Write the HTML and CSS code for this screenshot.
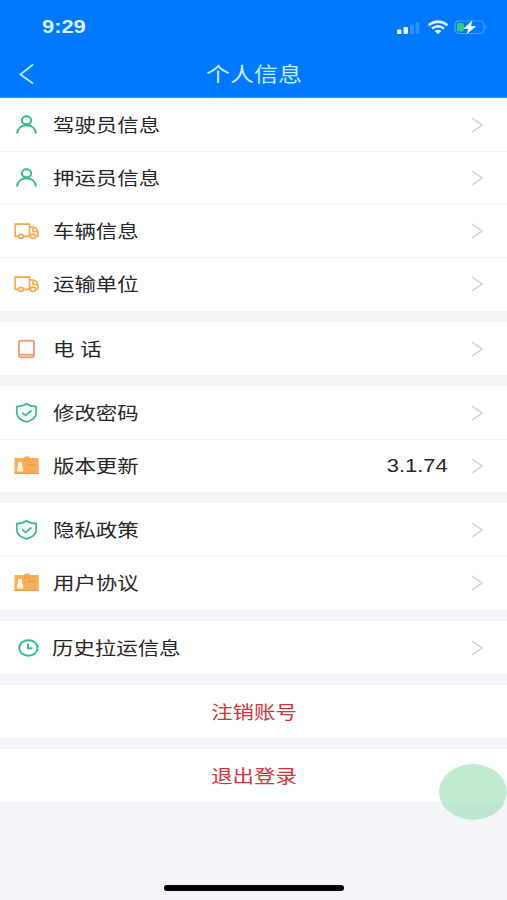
FILE: index.html
```html
<!DOCTYPE html>
<html lang="zh-CN">
<head>
<meta charset="utf-8">
<title>个人信息</title>
<link rel="stylesheet" href="styles.css">
</head>
<body>
<svg class="defs" width="0" height="0">
  <symbol id="user" viewBox="0 0 28 24"><ellipse cx="14.500" cy="7.300" rx="4.700" ry="4"/><path d="M5 20.500C5.600 15.400 9.500 12.200 14.500 12.200s8.900 3.200 9.500 8.300"/></symbol>
  <symbol id="truck" viewBox="0 0 28 24"><path d="M6.500 17.300H3.200V5.200h14.300v12.100h-6M17.500 8h3.500q4.500 1 4.800 5v4.300h-1.500M21 9v3.500h4.500"/><ellipse cx="9" cy="17.300" rx="2.500" ry="2"/><ellipse cx="21" cy="17.300" rx="2.700" ry="2.100"/></symbol>
  <symbol id="phone" viewBox="0 0 28 24"><rect x="7" y="3.700" width="15" height="16.500" rx="2"/><path d="M7 17.700h15"/></symbol>
  <symbol id="shield" viewBox="0 0 28 24"><path d="M14.500 2.700C11.500 4.800 8 5.600 4.800 5.600v6.200c0 4.600 4.300 7.600 9.700 9.200 5.400-1.600 9.700-4.600 9.700-9.200V5.600c-3.200 0-6.700-.8-9.700-2.900z"/><path d="m10.200 11.600 3.300 2.900 6-5"/></symbol>
  <symbol id="badge" viewBox="0 0 28 24"><path class="solid" d="M2.500 4H12.500V2.500h5V4h9.200v16H2.500z"/><path class="cut" d="M12.500 4v3h4.500V4M2.500 19.500h24M16 10.500h7"/><path class="face" d="M5 17.500V14l.8-1V8.500q2.200-1.500 4.400 0V13l1 1v3.500z"/></symbol>
  <symbol id="clock" viewBox="0 0 28 24"><ellipse cx="16.400" cy="12" rx="9.200" ry="7.700"/><path d="M16 7.800v4.400h4.500"/></symbol>
  <symbol id="next" viewBox="0 0 12 18"><path d="m1 2 10 7-10 7"/></symbol>
</svg>
<div class="screen">
  <header class="header">
    <div class="status">
      <span class="time">9:29</span>
      <div class="indicators">
        <svg width="26" height="16" viewBox="0 0 26 16"><g fill="#e8fbff"><rect x="1" y="10.500" width="4.500" height="4.500" rx="1.200"/><rect x="7.500" y="8" width="4.500" height="7" rx="1.200"/></g><g fill="#3092ff"><rect x="13.800" y="5.500" width="4" height="9.500" rx="1"/><rect x="19.500" y="3" width="4" height="12" rx="1"/></g></svg>
        <svg width="22" height="16" viewBox="0 0 22 16" fill="none" stroke="#e8fbff" stroke-width="2.500"><path d="M1.500 6.300Q11 -1 20.500 6.300M5 9.600q6-4.600 12 0"/><path d="M7.600 12q3.400-2.400 6.800 0L11 15.200z" fill="#e8fbff" stroke="none"/></svg>
        <svg width="34" height="16" viewBox="0 0 34 16"><rect x="1" y="2" width="29" height="12.500" rx="4" fill="none" stroke="#4da2ff" stroke-width="1.200"/><path d="M31.500 6q2 2.200 0 4.400z" fill="#4da2ff"/><rect x="3" y="4" width="7" height="8.500" rx="2" fill="#35c985"/><path d="m18 2-8 7.500h5L13 14.500l8.500-7h-5z" fill="#f2fcff" stroke="#f2fcff" stroke-width=".7"/></svg>
      </div>
    </div>
    <div class="navbar">
      <svg class="back" width="16" height="22" viewBox="0 0 16 22"><path d="M14 1.500 1.500 11.500 14 20.500"/></svg>
      <h1 class="title">个人信息</h1>
    </div>
  </header>
  <main class="content">
    <section class="group">
      <div class="row"><svg class="icon green"><use href="#user"/></svg><span class="label">驾驶员信息</span><svg class="next"><use href="#next"/></svg></div>
      <div class="row"><svg class="icon green"><use href="#user"/></svg><span class="label">押运员信息</span><svg class="next"><use href="#next"/></svg></div>
      <div class="row"><svg class="icon orange thin"><use href="#truck"/></svg><span class="label">车辆信息</span><svg class="next"><use href="#next"/></svg></div>
      <div class="row"><svg class="icon orange thin"><use href="#truck"/></svg><span class="label">运输单位</span><svg class="next"><use href="#next"/></svg></div>
    </section>
    <section class="group">
      <div class="row"><svg class="icon coral"><use href="#phone"/></svg><span class="label">电 话</span><svg class="next"><use href="#next"/></svg></div>
    </section>
    <section class="group">
      <div class="row"><svg class="icon green thin"><use href="#shield"/></svg><span class="label">修改密码</span><svg class="next"><use href="#next"/></svg></div>
      <div class="row"><svg class="icon orange"><use href="#badge"/></svg><span class="label">版本更新</span><span class="value">3.1.74</span><svg class="next"><use href="#next"/></svg></div>
    </section>
    <section class="group">
      <div class="row"><svg class="icon green thin"><use href="#shield"/></svg><span class="label">隐私政策</span><svg class="next"><use href="#next"/></svg></div>
      <div class="row"><svg class="icon orange"><use href="#badge"/></svg><span class="label">用户协议</span><svg class="next"><use href="#next"/></svg></div>
    </section>
    <section class="group">
      <div class="row"><svg class="icon green"><use href="#clock"/></svg><span class="label wide">历史拉运信息</span><svg class="next"><use href="#next"/></svg></div>
    </section>
    <section class="group"><div class="row action"><span class="action-text">注销账号</span></div></section>
    <section class="group"><div class="row action"><span class="action-text">退出登录</span></div></section>
  </main>
  <div class="float-ball"></div>
  <div class="home-bar"></div>
</div>
</body>
</html>
```
FILE: styles.css
```css
* { box-sizing: border-box; }
body {
  margin: 0;
  font-family: "Liberation Sans", "Noto Sans CJK SC", sans-serif;
  color: #262626;
}
.defs { position: absolute; }
.screen {
  position: relative;
  display: flex;
  flex-direction: column;
  height: 900px;
  overflow: hidden;
  background: #f3f5f9;
}
.header {
  height: 98px;
  flex: none;
  background: #0079ff;
  border-bottom: 1px solid #3a98ff;
}
.status {
  display: flex;
  justify-content: space-between;
  align-items: center;
  height: 52px;
  padding: 1px 19px 0 42px;
}
.time {
  padding-top: 1px;
  font-size: 17.5px;
  font-weight: 700;
  color: #dcf8ff;
  transform: scaleX(1.25);
  transform-origin: left;
}
.indicators { display: flex; gap: 5px; }
.navbar {
  display: flex;
  align-items: center;
  height: 44px;
  padding: 0 19px;
}
.back {
  fill: none;
  stroke: #b9eaff;
  stroke-width: 1.8;
}
.title {
  flex: 1;
  margin: 0 16px 0 1px;
  padding-top: 2px;
  text-align: center;
  font-size: 20px;
  line-height: 24px;
  font-weight: 400;
  color: #c4edff;
  transform: scaleX(1.2);
}
.content {
  display: flex;
  flex-direction: column;
  gap: 11.1px;
}
.group { background: #fff; }
.row {
  display: flex;
  align-items: center;
  height: 53.15px;
  padding: 1px 24px 0 12px;
}
.row + .row {
  padding-top: 0;
  border-top: 1px solid #f5f5f6;
}
.icon {
  width: 28px;
  height: 24px;
  fill: none;
  stroke: currentColor;
  stroke-width: 2;
}
.thin { stroke-width: 1.7; }
.green { color: #35bd83; }
.orange { color: #f5a84e; }
.coral { color: #f1a17e; }
.solid { fill: #f8ae58; stroke: none; }
.cut { stroke: #e39d4b; stroke-width: 1; }
.face { fill: #fff3dc; stroke: none; }
.label {
  margin-left: 12.6px;
  padding-top: 2px;
  font-size: 18px;
  line-height: 26px;
  white-space: pre;
  transform: scaleX(1.19);
  transform-origin: left;
}
.wide { margin-left: 12px; }
.value {
  margin-left: auto;
  padding-top: 1px;
  font-size: 17.5px;
  transform: scaleX(1.25);
  transform-origin: right;
}
.next {
  width: 12px;
  height: 18px;
  margin-left: auto;
  fill: none;
  stroke: #d0d0d0;
  stroke-width: 1.4;
}
.value + .next { margin-left: 23px; }
.action {
  justify-content: center;
  padding: 0;
}
.action-text {
  padding-top: 3px;
  font-size: 18px;
  line-height: 26px;
  color: #d2343e;
  transform: scaleX(1.19);
}
.float-ball {
  position: absolute;
  right: 0;
  top: 764px;
  width: 68px;
  height: 56px;
  border-radius: 50%;
  background: rgba(157, 223, 183, 0.62);
}
.home-bar {
  position: absolute;
  left: 164px;
  bottom: 9px;
  width: 180px;
  height: 6px;
  border-radius: 3px;
  background: #000;
}
```
